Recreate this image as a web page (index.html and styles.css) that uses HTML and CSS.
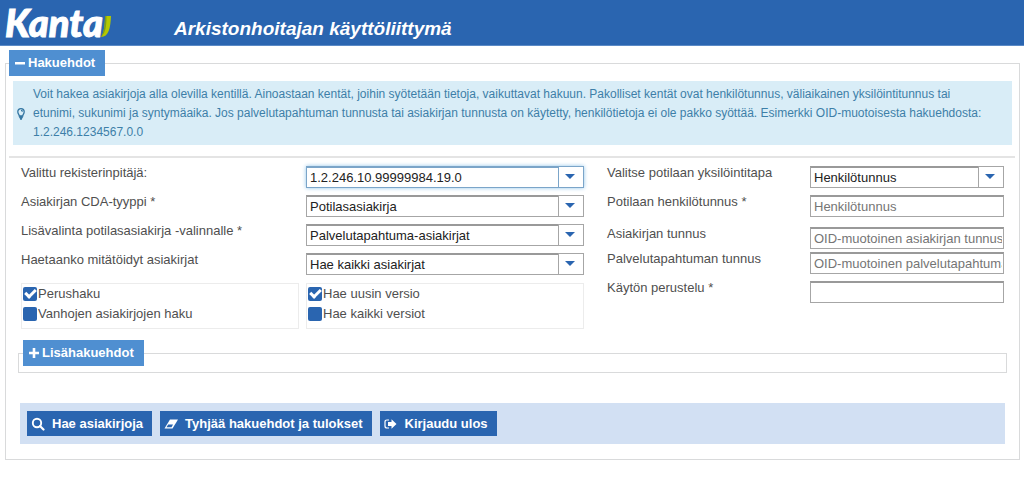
FILE: index.html
```html
<!DOCTYPE html>
<html lang="fi">
<head>
<meta charset="utf-8">
<title>Arkistonhoitajan käyttöliittymä</title>
<link rel="stylesheet" href="styles.css">
</head>
<body>
<header class="topbar">
  <div class="logo">Kanta<svg class="logo-leaf" viewBox="0 0 10 21" aria-hidden="true"><path d="M4 0H10C9.500 12 7.500 21 0 21C3 17 4 8 4 0Z" fill="#b4c800"/><path d="M4 0H5.500C5.500 11 4.500 17 0 21C3 17 4 8 4 0Z" fill="#7d9c1c"/></svg></div>
  <h1 class="title">Arkistonhoitajan käyttöliittymä</h1>
</header>
<main class="page">
  <fieldset class="panel">
    <legend class="tab"><svg class="tab-icon" viewBox="0 0 10 10" aria-hidden="true"><path d="M0 4H10V6.500H0Z" fill="#fff"/></svg>Hakuehdot</legend>
    <div class="info">
      <svg class="info-icon" viewBox="0 0 10 14" aria-hidden="true"><path d="M3.300 9C3.300 7.500 1.800 7 1.800 4.800A3.200 3.200 0 0 1 8.200 4.800C8.200 7 6.700 7.500 6.700 9ZM3.200 10.500H6.800M4 12H6M5 3.300Q6.400 3.400 6.500 4.600" fill="none" stroke="#3577a3" stroke-width="1.300"/></svg>
      <p class="info-text">Voit hakea asiakirjoja alla olevilla kentillä. Ainoastaan kentät, joihin syötetään tietoja, vaikuttavat hakuun. Pakolliset kentät ovat henkilötunnus, väliaikainen yksilöintitunnus tai<br>etunimi, sukunimi ja syntymäaika. Jos palvelutapahtuman tunnusta tai asiakirjan tunnusta on käytetty, henkilötietoja ei ole pakko syöttää. Esimerkki OID-muotoisesta hakuehdosta:<br>1.2.246.1234567.0.0</p>
    </div>
    <hr class="rule">
    <form class="form">
      <div class="column column-wide">
        <div class="row">
          <label for="rekisteri">Valittu rekisterinpitäjä:</label>
          <div class="select select-active"><select id="rekisteri"><option>1.2.246.10.99999984.19.0</option></select></div>
        </div>
        <div class="row">
          <label for="cda">Asiakirjan CDA-tyyppi&nbsp;*</label>
          <div class="select"><select id="cda"><option>Potilasasiakirja</option></select></div>
        </div>
        <div class="row">
          <label for="lisavalinta">Lisävalinta potilasasiakirja -valinnalle&nbsp;*</label>
          <div class="select"><select id="lisavalinta"><option>Palvelutapahtuma-asiakirjat</option></select></div>
        </div>
        <div class="row">
          <label for="mitatoidyt">Haetaanko mitätöidyt asiakirjat</label>
          <div class="select"><select id="mitatoidyt"><option>Hae kaikki asiakirjat</option></select></div>
        </div>
        <div class="row row-checks">
          <div class="checks">
            <label class="check"><input type="checkbox" checked>Perushaku</label>
            <label class="check"><input type="checkbox">Vanhojen asiakirjojen haku</label>
          </div>
          <div class="checks">
            <label class="check"><input type="checkbox" checked>Hae uusin versio</label>
            <label class="check"><input type="checkbox">Hae kaikki versiot</label>
          </div>
        </div>
      </div>
      <div class="column column-narrow">
        <div class="row">
          <label for="tapa">Valitse potilaan yksilöintitapa</label>
          <div class="select"><select id="tapa"><option>Henkilötunnus</option></select></div>
        </div>
        <div class="row">
          <label for="hetu">Potilaan henkilötunnus&nbsp;*</label>
          <input class="field" id="hetu" type="text" placeholder="Henkilötunnus">
        </div>
        <div class="row row-loose">
          <label for="asiakirja">Asiakirjan tunnus</label>
          <input class="field" id="asiakirja" type="text" placeholder="OID-muotoinen asiakirjan tunnus">
        </div>
        <div class="row">
          <label for="palvelu">Palvelutapahtuman tunnus</label>
          <input class="field" id="palvelu" type="text" placeholder="OID-muotoinen palvelutapahtuman tunnus">
        </div>
        <div class="row">
          <label for="perustelu">Käytön perustelu&nbsp;*</label>
          <input class="field" id="perustelu" type="text">
        </div>
      </div>
    </form>
    <fieldset class="panel subpanel">
      <legend class="tab"><svg class="tab-icon" viewBox="0 0 10 10" aria-hidden="true"><path d="M3.700 0H6.300V3.700H10V6.300H6.300V10H3.700V6.300H0V3.700H3.700Z" fill="#fff"/></svg>Lisähakuehdot</legend>
    </fieldset>
    <div class="actions">
      <button class="button" type="button"><svg class="button-icon" viewBox="0 0 14 14" aria-hidden="true"><circle cx="6" cy="6" r="4.200" fill="none" stroke="#fff" stroke-width="1.900"/><path d="M9 9L12.500 12.500" stroke="#fff" stroke-width="2.200" stroke-linecap="round"/></svg>Hae asiakirjoja</button>
      <button class="button" type="button"><svg class="button-icon" viewBox="0 0 14 14" aria-hidden="true"><path d="M6 2.500H14L8.500 11.500H0.500Z" fill="#fff"/><path d="M2.500 10.200L4.200 7.500H9L7.500 10.200Z" fill="#2a65b0"/></svg>Tyhjää hakuehdot ja tulokset</button>
      <button class="button" type="button"><svg class="button-icon" viewBox="0 0 14 14" aria-hidden="true"><path d="M5 3H3Q1 3 1 5V9Q1 11 3 11H5" fill="none" stroke="#fff" stroke-width="1.200"/><path d="M4 5H7.500V2.300L12.500 7L7.500 11.700V9H4Z" fill="#fff"/></svg>Kirjaudu ulos</button>
    </div>
  </fieldset>
</main>
</body>
</html>
```
FILE: styles.css
```css
*,
*::before,
*::after { box-sizing: border-box; }
body {
  margin: 0;
  background: #fff;
  color: #4f4f4f;
  font: 13px/20px "Liberation Sans", Arial, sans-serif;
}
.topbar {
  display: flex;
  gap: 62px;
  height: 46px;
  padding-left: 5px;
  background: #2a65b0;
  border-bottom: 1px solid #5b8ac6;
  color: #fff;
}
.logo {
  display: flex;
  width: 107px;
  font: italic 900 38px/44px Lato, sans-serif;
  -webkit-text-stroke: 1px #fff;
}
.logo-leaf {
  flex: none;
  width: 10px;
  height: 21px;
  margin: 16px 0 0 -2px;
}
.title {
  margin: 0;
  padding-top: 17px;
  font: italic bold 19px/24px "Liberation Sans", Arial, sans-serif;
}
.page { padding: 4px 4px 0 5px; }
.panel {
  min-width: 0;
  margin: 0;
  padding: 0;
  border: 1px solid #d9dadb;
}
.tab {
  display: flex;
  align-items: center;
  gap: 3px;
  height: 26px;
  margin-left: 3px;
  padding: 0 10px 0 6px;
  background: #4f8fd1;
  color: #fff;
  font-weight: bold;
}
.tab-icon { width: 10px; height: 10px; }
.info {
  display: flex;
  align-items: center;
  gap: 7px;
  margin: 5px 7px 0;
  padding: 4px 4px 3px 3px;
  background: #d9edf7;
  color: #3d7fa8;
}
.info-icon {
  flex: none;
  width: 10px;
  height: 14px;
}
.info-text {
  margin: 0;
  font-size: 12px;
  line-height: 19px;
}
.rule {
  height: 2px;
  margin: 11px 4px 8px 3px;
  border: 0;
  background: #e4e4e4;
}
.form {
  display: grid;
  grid-template-columns: 563fr 397fr;
  column-gap: 23px;
  padding: 0 15px;
}
.column-wide .row { grid-template-columns: 285fr 278fr; }
.column-narrow .row { grid-template-columns: 203fr 194fr; }
.row {
  display: grid;
  align-items: start;
  margin-bottom: 7px;
  line-height: 14px;
}
.row-loose { margin: 10px 0 3px; }
.field,
.select select {
  width: 100%;
  height: 22px;
  margin: 0;
  padding: 0 1px 0 3px;
  border: 1px solid #a6a6a6;
  border-top: 2px solid #999;
  border-radius: 0;
  background: #fff;
  color: #222;
  font: inherit;
  appearance: none;
}
.field::placeholder { color: #757575; }
.select {
  position: relative;
  display: flex;
}
.select::before {
  content: "";
  position: absolute;
  top: 0;
  right: 0;
  width: 26px;
  height: 22px;
  border: 1px solid #a6a6a6;
  background: #fff;
  pointer-events: none;
}
.select::after {
  content: "";
  position: absolute;
  top: 8px;
  right: 9px;
  border: 5px solid transparent;
  border-top-color: #2a65b0;
  border-bottom: 0;
  pointer-events: none;
}
.select-active { box-shadow: 0 0 4px #8fc4ea; }
.select-active select,
.select-active::before { border-color: #7ba5c9; }
.row-checks { margin: 8px 0 0; }
.checks {
  display: grid;
  gap: 6px;
  padding: 3px 1px 7px;
  border: 1px solid #ececec;
}
.checks:first-child { margin-right: 7px; }
.check {
  display: flex;
  align-items: center;
  gap: 1px;
  height: 14px;
}
.check input {
  width: 14px;
  height: 14px;
  margin: 0;
  border-radius: 2px;
  background: #2a65b0;
  appearance: none;
}
.check input:checked::before {
  content: "";
  display: block;
  width: 11px;
  height: 7px;
  margin: 2px;
  border: solid #fff;
  border-width: 0 0 3px 3px;
  transform: rotate(-45deg);
}
.subpanel { margin: 11px 12px 30px; }
.subpanel .tab {
  margin: 0 0 6px 4px;
}
.actions {
  display: flex;
  gap: 8px;
  margin: 0 14px 15px;
  padding: 8px 7px;
  background: #d2e0f3;
}
.button {
  display: flex;
  align-items: center;
  gap: 7px;
  height: 25px;
  padding: 0 9px 0 4px;
  border: 0;
  background: #2a65b0;
  color: #fff;
  font: bold 13px/20px "Liberation Sans", Arial, sans-serif;
}
.button-icon { width: 14px; height: 14px; }
```
